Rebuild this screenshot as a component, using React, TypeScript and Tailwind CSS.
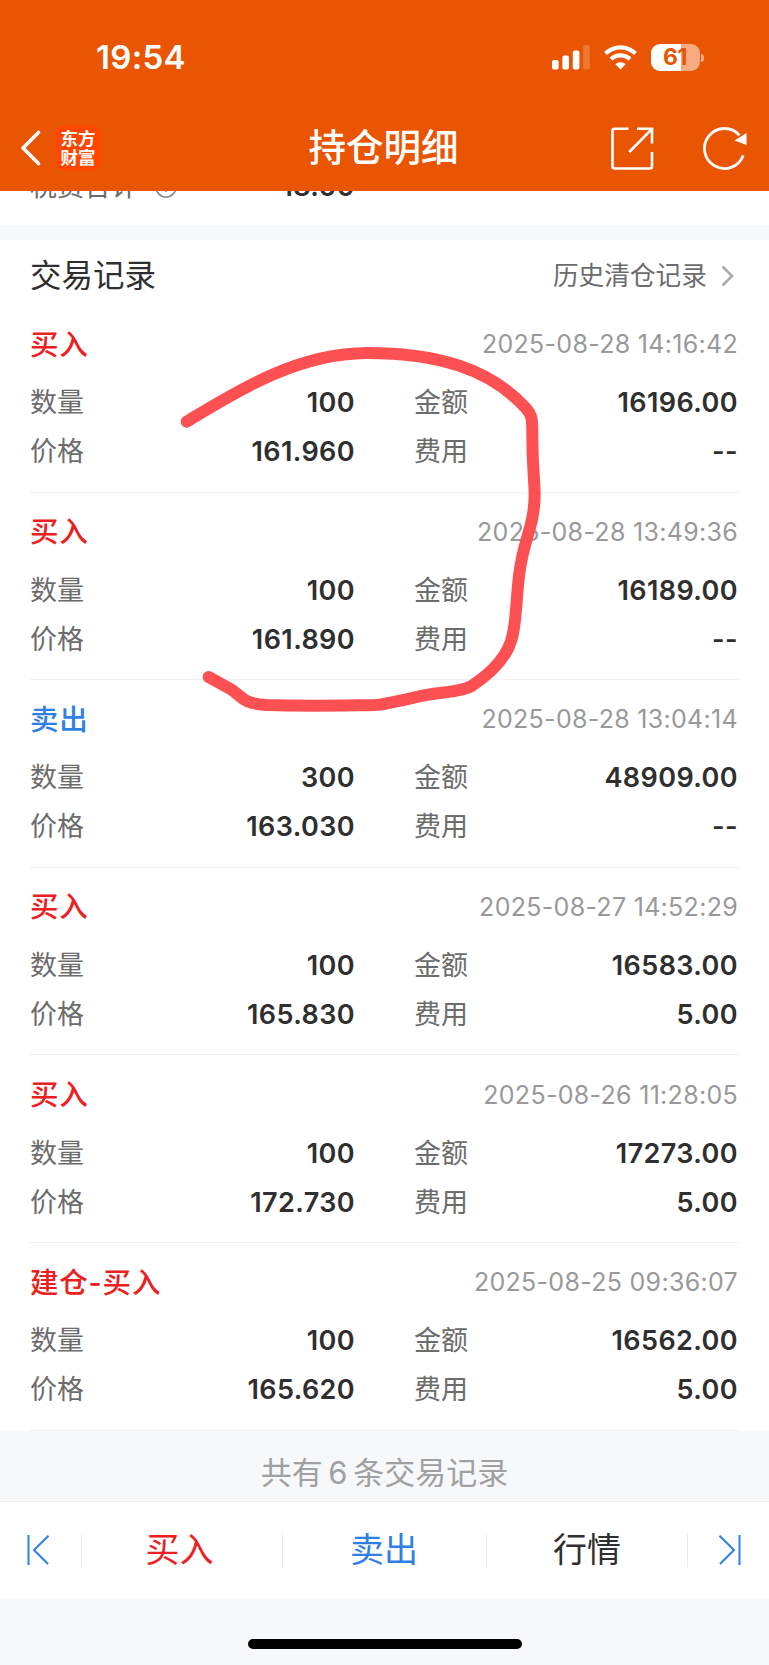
type Trade = {
  type: string;
  side: "buy" | "sell";
  time: string;
  quantity: string;
  price: string;
  amount: string;
  fee: string;
};

const trades: Trade[] = [
  { type: "买入", side: "buy", time: "2025-08-28 14:16:42", quantity: "100", price: "161.960", amount: "16196.00", fee: "--" },
  { type: "买入", side: "buy", time: "2025-08-28 13:49:36", quantity: "100", price: "161.890", amount: "16189.00", fee: "--" },
  { type: "卖出", side: "sell", time: "2025-08-28 13:04:14", quantity: "300", price: "163.030", amount: "48909.00", fee: "--" },
  { type: "买入", side: "buy", time: "2025-08-27 14:52:29", quantity: "100", price: "165.830", amount: "16583.00", fee: "5.00" },
  { type: "买入", side: "buy", time: "2025-08-26 11:28:05", quantity: "100", price: "172.730", amount: "17273.00", fee: "5.00" },
  { type: "建仓-买入", side: "buy", time: "2025-08-25 09:36:07", quantity: "100", price: "165.620", amount: "16562.00", fee: "5.00" },
];

const StatusBar = () => (
  <div className="flex h-[115px] items-center justify-between pl-[96px] pr-[65px]">
    <span className="text-[33px] leading-none font-semibold tracking-[0.3px]">19:54</span>
    <div className="flex items-center">
      <svg width="38" height="25" viewBox="0 0 38 25" fill="#fff" className="mr-[14px]">
        <rect x="0" y="15" width="6.6" height="9.5" rx="2" />
        <rect x="10.4" y="10.5" width="6.6" height="14" rx="2" />
        <rect x="20.8" y="5.5" width="6.6" height="19" rx="2" />
        <rect x="31.2" y="0" width="6.6" height="24.5" rx="2" opacity="0.2" />
      </svg>
      <svg width="33" height="25" viewBox="0 0 33 25" fill="none" stroke="#fff" className="mr-[14px]">
        <path d="M1.5 8.6C10 .3 23 .3 31.5 8.6" strokeWidth="4.2" />
        <path d="M7 14.1C12.5 9 20.5 9 26 14.1" strokeWidth="4.2" />
        <path d="M16.5 24.4L11.4 19.2C14.2 16.6 18.8 16.6 21.6 19.2Z" fill="#fff" stroke="none" />
      </svg>
      <div className="flex h-[27.5px] w-[49px] items-center justify-center rounded-[9px] bg-[linear-gradient(90deg,#fff_61%,#f5aa82_61%)] text-[23px] leading-none font-bold tracking-[-0.5px] text-[#ea5504]">
        61
      </div>
      <div className="ml-[1.5px] h-[8px] w-[3px] rounded-r-full bg-[#f5aa82]" />
    </div>
  </div>
);

const Header = () => (
  <header className="relative z-10 h-[191px] shrink-0 bg-[#ea5504] text-white">
    <StatusBar />
    <div className="grid h-[66px] grid-cols-3 items-center pl-[20px] pr-[22px]">
      <div className="flex items-center">
        <svg width="22" height="36" viewBox="0 0 22 36" fill="none" stroke="#fff" strokeWidth="3.6" strokeLinecap="round" strokeLinejoin="round">
          <path d="M18.5 2.5L3 18L18.5 33.5" />
        </svg>
        <div className="ml-[13px] flex size-[46px] flex-col items-center justify-center rounded-[10px] bg-[#ff4700] text-[17.5px] leading-[19px] font-bold">
          <span>东方</span>
          <span>财富</span>
        </div>
      </div>
      <h1 className="pb-px text-center text-[37.5px] leading-none font-medium whitespace-nowrap">持仓明细</h1>
      <div className="flex items-center justify-end">
        <svg width="44" height="44" viewBox="0 0 44 44" fill="none" stroke="#fff" strokeWidth="2.6" className="mr-[49px]">
          <path d="M18.5 2.8H4.5A2 2 0 0 0 2.5 4.8V40.5A2 2 0 0 0 4.5 42.5H40A2 2 0 0 0 42 40.5V26" />
          <path d="M27 2.8H42V17.5" />
          <path d="M42 2.8L19.3 26" />
        </svg>
        <svg width="44" height="44" viewBox="0 0 44 44" fill="none" stroke="#fff" strokeWidth="2.8">
          <path d="M40.2 29.5A20 20 0 1 1 36.5 9.3" />
          <path d="M43.5 7V19L31.5 14.6Z" fill="#fff" stroke="none" />
        </svg>
      </div>
    </div>
  </header>
);

const Field = ({ label, value, className }: { label: string; value: string; className: string }) => (
  <div className={`flex items-center justify-between ${className}`}>
    <span className="text-[27px] text-[#6c6c6c]">{label}</span>
    <span className="text-[27px] font-semibold tracking-[0.4px] text-[#2f2f2f]">{value}</span>
  </div>
);

const TradeRow = ({ trade }: { trade: Trade }) => (
  <div className="mx-[30px] h-[187.6px] border-b border-[#f0f0f0] pt-[15.5px]">
    <div className="flex h-[49px] items-center justify-between pr-px">
      <span className={`text-[28.5px] font-medium tracking-[0.8px] ${trade.side === "buy" ? "text-[#ec2020]" : "text-[#2f7fe5]"}`}>
        {trade.type}
      </span>
      <span className="text-[25px] tracking-[0.3px] text-[#999]">{trade.time}</span>
    </div>
    <div className="mt-[9.5px] flex h-[49px] items-center pr-px">
      <Field label="数量" value={trade.quantity} className="w-[325px]" />
      <Field label="金额" value={trade.amount} className="ml-[59px] flex-1" />
    </div>
    <div className="flex h-[49px] items-center pr-px">
      <Field label="价格" value={trade.price} className="w-[325px]" />
      <Field label="费用" value={trade.fee} className="ml-[59px] flex-1" />
    </div>
  </div>
);

const BottomBar = () => (
  <nav className="flex h-[97px] shrink-0 items-center border-t border-[#eee] bg-white text-[34px] leading-none">
    <button className="flex h-[33px] w-[82px] items-center border-r border-[#eaeaea] pl-[27px]">
      <svg width="24" height="30" viewBox="0 0 24 30" fill="none" stroke="#2f7fe5" strokeWidth="2">
        <path d="M1.5 0V30M21.5 .7L7 15L21 29" />
      </svg>
    </button>
    <button className="flex h-[33px] w-[201px] items-center justify-center border-r border-[#eaeaea] pr-[5px] text-[#ec2020]">买入</button>
    <button className="flex h-[33px] w-[204px] items-center justify-center border-r border-[#eaeaea] pr-px text-[#2f7fe5]">卖出</button>
    <button className="flex h-[33px] w-[201px] items-center justify-center border-r border-[#eaeaea] text-[#2f2f2f]">行情</button>
    <button className="flex h-[33px] flex-1 items-center pl-[30px]">
      <svg width="24" height="30" viewBox="0 0 24 30" fill="none" stroke="#2f7fe5" strokeWidth="2">
        <path d="M21.5 0V30M1.5 .7L16 15L2 29" />
      </svg>
    </button>
  </nav>
);

const App = () => {
  return (
    <div className="relative flex h-[1665px] w-[769px] flex-col overflow-hidden bg-[#f7f8fa] font-[Inter,'Noto_Sans_CJK_SC',sans-serif]">
      <Header />

      {/* Tail of the summary card, scrolled under the header */}
      <section className="h-[34px] shrink-0 bg-white px-[30px]">
        <div className="-mt-[24px] flex h-[40px] w-[325px] items-center">
          <span className="text-[27px] text-[#6c6c6c]">税费合计</span>
          <svg width="22" height="22" viewBox="0 0 22 22" fill="none" stroke="#888" strokeWidth="1.6" className="ml-[17px]">
            <circle cx="11" cy="11" r="10" />
            <path d="M11 9V16M11 5V7" />
          </svg>
          <span className="ml-auto text-[27px] font-semibold tracking-[0.4px] text-[#2f2f2f]">18.00</span>
        </div>
      </section>

      <section className="mt-[15px] shrink-0 bg-white">
        <div className="flex h-[65px] items-center justify-between pt-[7px] pr-[34px] pl-[30px]">
          <h2 className="text-[31.5px] leading-none text-[#2f2f2f]">交易记录</h2>
          <div className="flex items-center text-[25.7px] leading-none text-[#6c6c6c]">
            历史清仓记录
            <svg width="13" height="22" viewBox="0 0 13 22" fill="none" stroke="#aaa" strokeWidth="2.6" className="mr-px ml-[14px]">
              <path d="M1.5 1.5L11 11L1.5 20.5" />
            </svg>
          </div>
        </div>
        {trades.map((trade) => (
          <TradeRow key={trade.time} trade={trade} />
        ))}
      </section>

      <p className="flex flex-1 items-center justify-center pt-[14px] text-[31px] leading-none text-[#a0a0a0] [word-spacing:-3px]">共有 6 条交易记录</p>

      <BottomBar />
      <div className="flex h-[67px] shrink-0 justify-center pt-[41px]">
        <div className="h-[10px] w-[274px] rounded-full bg-black" />
      </div>

      {/* Hand-drawn marker over the first two trades */}
      <svg className="pointer-events-none absolute top-[330px] left-[170px] z-20" width="400" height="400" viewBox="0 0 1200 1200" fill="none" stroke="#fd5052" strokeWidth="36" strokeLinecap="round" strokeLinejoin="round">
        <path d="M50 275C200 184 380 70 590 69C800 69 960 115 1068 235C1084 253 1087 265 1087 300C1086 400 1093 440 1094 490C1094 590 1062 620 1048 730C1038 810 1040 860 1028 915C1014 985 955 1035 905 1068C870 1088 800 1086 740 1101C620 1128 630 1126 560 1126C480 1127 380 1128 290 1125C210 1120 215 1095 180 1076L116 1041" />
      </svg>
    </div>
  );
};

export default App;
